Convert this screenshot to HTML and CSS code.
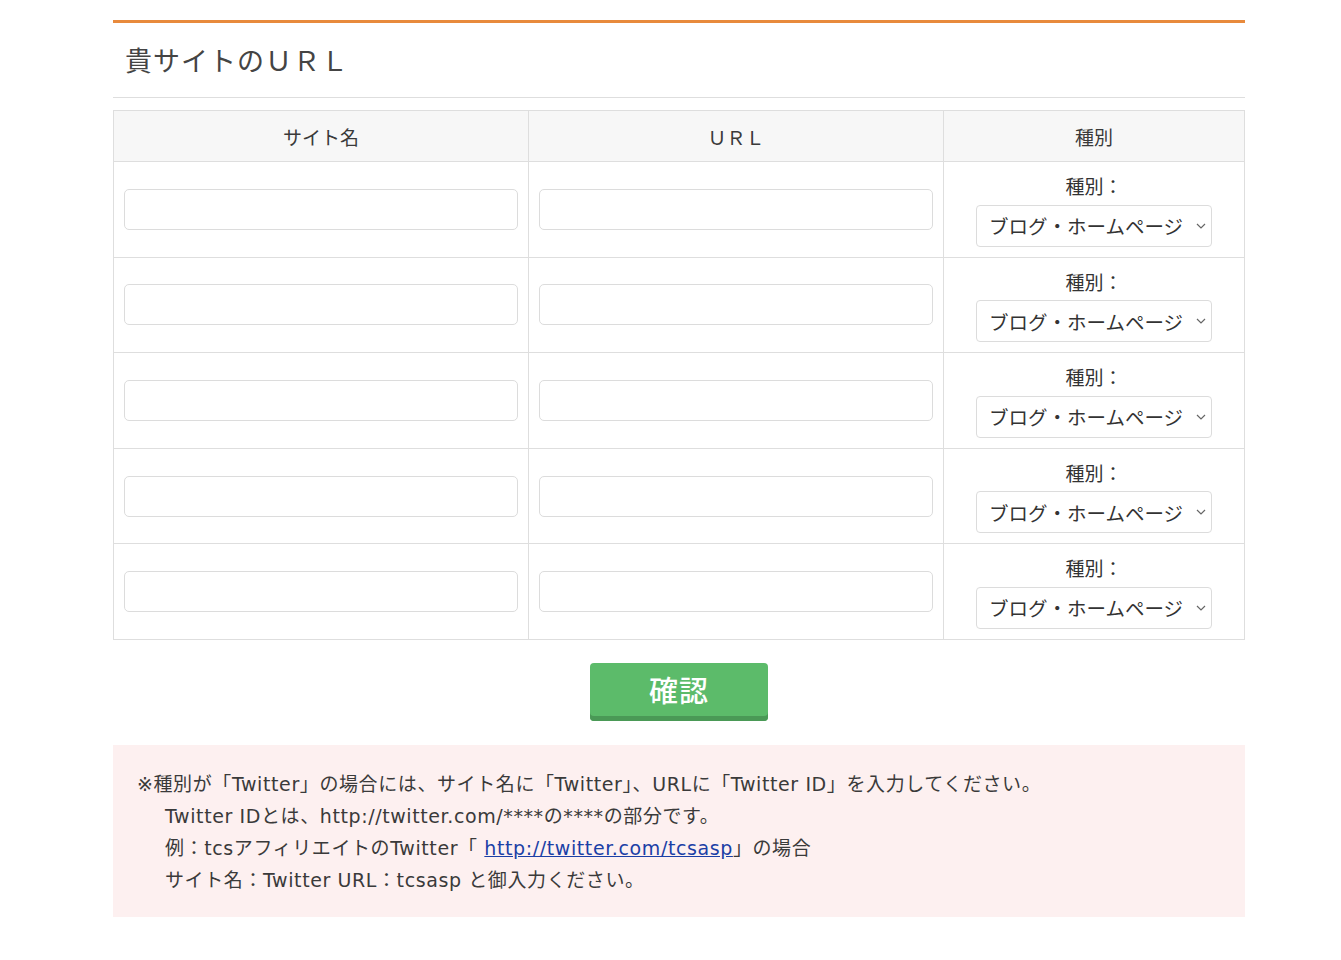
FILE: index.html
```html
<!DOCTYPE html>
<html>

<head>
	<meta http-equiv="Content-Type" content="text/html; charset=utf-8"/>
	<title>貴サイトのＵＲＬ</title>
	<link rel="stylesheet" href="styles.css">
</head>

<body>
<div class="page">
	<h2 class="section-title">貴サイトのＵＲＬ</h2>

	<form class="site-form">
		<table class="site-table">
			<thead>
				<tr>
					<th class="col-name">サイト名</th>
					<th class="col-url">ＵＲＬ</th>
					<th class="col-type">種別</th>
				</tr>
			</thead>
			<tbody id="rows">
			</tbody>
		</table>

		<div class="actions">
			<button type="button" class="btn-confirm">確認</button>
		</div>
	</form>

	<div class="note">
		<p>※種別が「Twitter」の場合には、サイト名に「Twitter」、URLに「Twitter ID」を入力してください。</p>
		<p class="indent">Twitter IDとは、http://twitter.com/****の****の部分です。</p>
		<p class="indent">例：tcsアフィリエイトのTwitter「 <a href="#">http://twitter.com/tcsasp</a>」の場合</p>
		<p class="indent">サイト名：Twitter URL：tcsasp と御入力ください。</p>
	</div>
</div>

<script>
	var rows = document.getElementById('rows');
	var html = '';
	for (var i = 0; i < 5; ++i) {
		html += `<tr>
			<td><input type="text" class="text-input" name="site_name[${i}]"/></td>
			<td><input type="text" class="text-input" name="site_url[${i}]"/></td>
			<td class="type-cell">
				<div class="type-label">種別：</div>
				<div class="select-wrap">
					<select name="site_type[${i}]">
						<option>ブログ・ホームページ</option>
						<option>Twitter</option>
					</select>
					<svg class="chevron" width="10" height="6" viewBox="0 0 10 6"><path d="M1 1l4 4 4-4" fill="none" stroke="#666" stroke-width="1.2"/></svg>
				</div>
			</td>
		</tr>`;
	}
	rows.innerHTML = html;
</script>
</body>

</html>
```

FILE: styles.css
```css
html {
    font-family: "Noto Sans CJK JP", "Noto Sans", sans-serif;
    color: #333;
}

body {
    margin: 0;
    padding: 20px 0 40px;
}

.page {
    width: 1132px;
    margin-left: 113px;
}

.section-title {
    border-top: 3px solid #e88a3c;
    border-bottom: 1px solid #dedede;
    margin: 0;
    height: 74px;
    line-height: 74px;
    padding-left: 12px;
    font-size: 27px;
    font-weight: normal;
    color: #444;
    letter-spacing: 1px;
}

.site-table {
    margin-top: 12px;
    width: 100%;
    border-collapse: collapse;
    table-layout: fixed;
}

.site-table th,
.site-table td {
    border: 1px solid #dedede;
}

.site-table th {
    background-color: #f7f7f7;
    height: 50px;
    padding: 0;
    font-size: 19px;
    font-weight: normal;
    color: #3a3a3a;
}

.col-name,
.col-url {
    width: 414px;
}

.site-table td {
    padding: 10px;
    height: 74px;
    vertical-align: middle;
}

.text-input {
    display: block;
    box-sizing: border-box;
    width: 100%;
    height: 41px;
    border: 1px solid #dcdcdc;
    border-radius: 5px;
    background: #fff;
    font-family: inherit;
    font-size: 18px;
    padding: 0 10px;
}

.type-cell {
    text-align: center;
}

.type-label {
    font-size: 19px;
    line-height: 27.6px;
    margin-bottom: 5px;
}

.select-wrap {
    position: relative;
    display: inline-block;
    vertical-align: top;
}

.select-wrap select {
    display: block;
    -webkit-appearance: none;
    appearance: none;
    box-sizing: border-box;
    width: 236px;
    height: 42px;
    border: 1px solid #dcdcdc;
    border-radius: 4px;
    background: #fff;
    font-family: inherit;
    font-size: 19.5px;
    color: #333;
    padding: 0 24px 0 12px;
}

.chevron {
    position: absolute;
    right: 6px;
    top: 18px;
    pointer-events: none;
}

.actions {
    text-align: center;
    margin-top: 23px;
}

.btn-confirm {
    width: 178px;
    height: 58px;
    border: 0;
    border-radius: 4px;
    background-color: #5cbb6a;
    box-shadow: inset 0 -5px 0 #4a9956;
    color: #fff;
    font-family: inherit;
    font-size: 29px;
    font-weight: 500;
    padding: 0 0 5px;
    letter-spacing: 1px;
}

.note {
    margin-top: 24px;
    background-color: #fdf0f0;
    padding: 23px 24px 21px;
    font-family: "DejaVu Sans", "Noto Sans CJK JP", sans-serif;
    font-size: 19px;
    line-height: 32px;
    letter-spacing: 0.6px;
    color: #3a3a3a;
}

.note p {
    margin: 0;
}

.note .indent {
    padding-left: 28px;
}

.note a {
    color: #1b3fa6;
}
```
